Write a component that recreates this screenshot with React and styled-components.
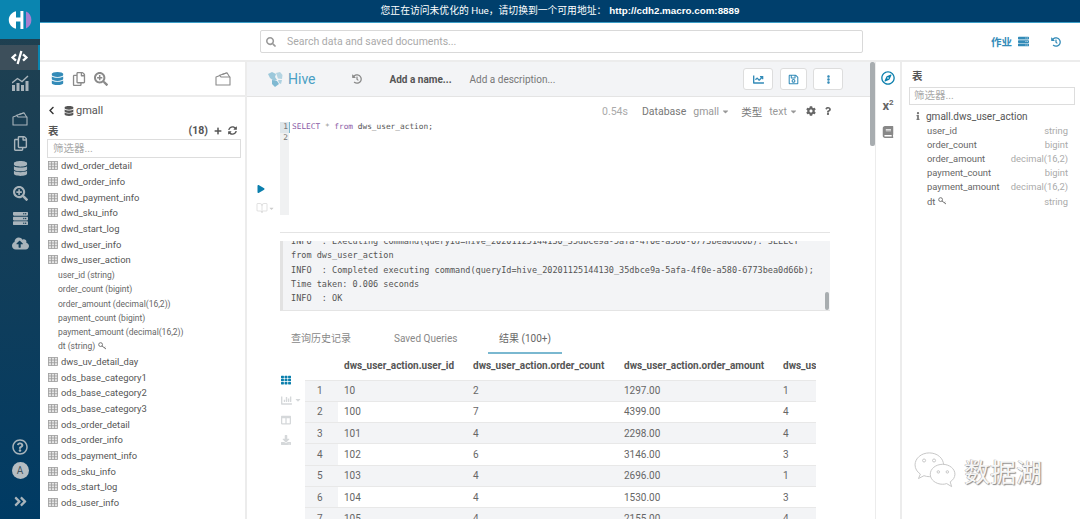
import React from 'react';
import styled, { createGlobalStyle } from 'styled-components';
import {
  FaAngleDoubleRight, FaBook, FaCaretDown, FaChartBar, FaChartLine, FaChevronLeft, FaCloudUploadAlt, FaCode, FaCog,
  FaColumns, FaDatabase, FaDownload, FaEllipsisV, FaHistory, FaInfo, FaPlay, FaPlus, FaQuestion, FaRegCompass,
  FaRegCopy, FaRegQuestionCircle, FaRegSave, FaSearch, FaSearchPlus, FaServer, FaSyncAlt, FaTh,
} from 'react-icons/fa';
import { BookOpen } from 'lucide-react';

const treeTop = ['dwd_order_detail', 'dwd_order_info', 'dwd_payment_info', 'dwd_sku_info', 'dwd_start_log', 'dwd_user_info', 'dws_user_action'];
const treeColumns = ['user_id (string)', 'order_count (bigint)', 'order_amount (decimal(16,2))', 'payment_count (bigint)', 'payment_amount (decimal(16,2))'];
const treeBottom = ['dws_uv_detail_day', 'ods_base_category1', 'ods_base_category2', 'ods_base_category3', 'ods_order_detail', 'ods_order_info', 'ods_payment_info', 'ods_sku_info', 'ods_start_log', 'ods_user_info'];
const assistColumns = [
  ['user_id', 'string'],
  ['order_count', 'bigint'],
  ['order_amount', 'decimal(16,2)'],
  ['payment_count', 'bigint'],
  ['payment_amount', 'decimal(16,2)'],
  ['dt', 'string', true],
];
const rows = [
  [1, 10, 2, '1297.00', 1],
  [2, 100, 7, '4399.00', 4],
  [3, 101, 4, '2298.00', 4],
  [4, 102, 6, '3146.00', 3],
  [5, 103, 4, '2696.00', 1],
  [6, 104, 4, '1530.00', 3],
  [7, 105, 4, '2155.00', 4],
];
const logLines = [
  'INFO  : Executing command(queryId=hive_20201125144130_35dbce9a-5afa-4f0e-a580-6773bea0d66b): SELECT *',
  'from dws_user_action',
  'INFO  : Completed executing command(queryId=hive_20201125144130_35dbce9a-5afa-4f0e-a580-6773bea0d66b);',
  'Time taken: 0.006 seconds',
  'INFO  : OK',
];

const HueLogo = () => (
  <svg width="24" height="20" viewBox="0 0 24 20">
    <path d="M8 1.2 V7.4 H12.4 V1 H15.4 V19 H12.4 V11.4 H8 V18.8 C3.6 17.6 .8 14.2 .8 10 C.8 5.8 3.6 2.4 8 1.2Z" fill="#fff" />
    <path d="M18 1.6 C21.4 3 23.4 6.2 23.4 10 C23.4 13.8 21.4 17 18 18.4Z" fill="#a77fd0" />
  </svg>
);

const TrendIcon = () => (
  <svg width="17" height="16" viewBox="0 0 17 16" fill="#a9b4bb">
    <rect x="0" y="10" width="3" height="6" />
    <rect x="4.5" y="8" width="3" height="8" />
    <rect x="9" y="10" width="3" height="6" />
    <rect x="13.5" y="6" width="3" height="10" />
    <path d="M0 8 L5.5 3.5 L10 6.5 L16 1" fill="none" stroke="#a9b4bb" strokeWidth="1.4" />
  </svg>
);

const FolderIcon = ({ color }) => (
  <svg width="16" height="14" viewBox="0 0 16 14" fill="none" stroke={color} strokeWidth="1.1" strokeLinejoin="round">
    <path d="M1 13 V5 L5 3.6 L6 5 H15 V13 Z" />
    <path d="M4 3.6 L12 .8 L14.6 5" />
    <path d="M7 2.6 L11.6 1" />
  </svg>
);

const TableIcon = () => (
  <svg width="10" height="9" viewBox="0 0 10 9" fill="none" stroke="#9b9b9b" strokeWidth="0.8">
    <rect x="0.5" y="0.5" width="9" height="8" fill="#e4e4e4" />
    <path d="M0.5 3 H9.5 M0.5 5.7 H9.5 M3.5 .5 V8.5 M6.5 .5 V8.5" />
  </svg>
);

const KeyIcon = () => (
  <svg width="9" height="8" viewBox="0 0 9 8" fill="none" stroke="#777" strokeWidth="1">
    <circle cx="2.6" cy="2.6" r="1.9" />
    <path d="M4 4 L8 7 M6.4 5.8 L7.2 4.8" />
  </svg>
);

const HiveIcon = () => (
  <svg width="16" height="15" viewBox="0 0 16 15" fill="#7fb9d2">
    <path d="M1 2 L5 0 L9 2 L8 5 L10 8 L7 9 L3 6 Z" opacity=".75" />
    <path d="M9 1 L13 0 L15.5 3 L15 7 L11 6.5 Z" opacity=".55" />
    <path d="M5 8 L10 9 L12 12 L8 15 L5 12 Z" />
    <path d="M11 8 L15 8 L14 12 L12 11 Z" opacity=".6" />
  </svg>
);

const WeChatIcon = () => (
  <svg width="42" height="38" viewBox="0 0 44 40" fill="#fff" stroke="#c4c4c4" strokeWidth="1">
    <path d="M16 2 C7.7 2 1 7.6 1 14.6 C1 18.6 3.2 22 6.6 24.3 L4.6 29 L10.4 26 C12.2 26.6 14 27 16 27 C24.3 27 31 21.4 31 14.6 C31 7.6 24.3 2 16 2Z" />
    <path d="M30 14 C22.8 14 17 18.7 17 24.5 C17 30.3 22.8 35 30 35 C31.5 35 33 34.8 34.3 34.3 L39.5 37.5 L38 32.5 C41 30.5 43 27.7 43 24.5 C43 18.7 37.2 14 30 14Z" />
    <circle cx="10.5" cy="10" r="1.6" />
    <circle cx="21" cy="10" r="1.6" />
    <circle cx="25.5" cy="22" r="1.3" />
    <circle cx="35" cy="22" r="1.3" />
  </svg>
);

const App = () => {
  return (
    <>
      <GlobalStyle />
      <Page>
        <Nav>
          <Logo><HueLogo /></Logo>
          <NavGroup>
            <NavItem $active><FaCode size={17} /></NavItem>
            <NavItem><TrendIcon /></NavItem>
          </NavGroup>
          <NavGroup $top={11}>
            <NavItem><FolderIcon color="#a9b4bb" /></NavItem>
            <NavItem><FaRegCopy size={15} /></NavItem>
            <NavItem><FaDatabase size={15} /></NavItem>
            <NavItem><FaSearchPlus size={15} /></NavItem>
            <NavItem><FaServer size={15} /></NavItem>
            <NavItem><FaCloudUploadAlt size={17} /></NavItem>
          </NavGroup>
          <NavFooter>
            <NavItem><FaRegQuestionCircle size={16} /></NavItem>
            <Avatar>A</Avatar>
            <NavItem $wide><FaAngleDoubleRight size={15} /></NavItem>
          </NavFooter>
        </Nav>

        <Content>
          <Banner>
            您正在访问未优化的 Hue，请切换到一个可用地址：<BannerLink>http://cdh2.macro.com:8889</BannerLink>
          </Banner>
          <TopBar>
            <SearchBox>
              <FaSearch size={10} color="#999" />
              <span>Search data and saved documents...</span>
            </SearchBox>
            <JobsButton>作业 <FaServer size={11} /></JobsButton>
            <FaHistory size={10} color="#338bb8" />
          </TopBar>

          <Workspace>
            <LeftPanel>
              <LeftTools>
                <FaDatabase size={13} color="#338bb8" />
                <FaRegCopy size={14} color="#8a8a8a" />
                <FaSearchPlus size={14} color="#8a8a8a" />
                <ToolSpacer />
                <FolderIcon color="#8a8a8a" />
              </LeftTools>
              <BackRow>
                <BackChevron size={9} color="#333" />
                <FaDatabase size={10} color="#555" />
                <span>gmall</span>
              </BackRow>
              <TreeHead>
                <strong>表</strong>
                <TreeActions>
                  <b>(18)</b>
                  <FaPlus size={8} />
                  <FaSyncAlt size={9} />
                </TreeActions>
              </TreeHead>
              <FilterInput>筛选器...</FilterInput>
              <Tree>
                {treeTop.map((name) => (
                  <TreeRow key={name}><TableIcon />{name}</TreeRow>
                ))}
                {treeColumns.map((name) => (
                  <TreeColumn key={name}>{name}</TreeColumn>
                ))}
                <TreeColumn>dt (string) <KeyIcon /></TreeColumn>
                {treeBottom.map((name) => (
                  <TreeRow key={name}><TableIcon />{name}</TreeRow>
                ))}
              </Tree>
            </LeftPanel>

            <Editor>
              <EditorHeader>
                <HiveIcon />
                <HiveTitle>Hive</HiveTitle>
                <HistoryWrap><FaHistory size={10} color="#8a8a8a" /></HistoryWrap>
                <NameLabel>Add a name...</NameLabel>
                <DescLabel>Add a description...</DescLabel>
                <HeaderButtons>
                  <HeaderButton $w={30}><FaChartLine size={11} /></HeaderButton>
                  <HeaderButton $w={27}><FaRegSave size={11} /></HeaderButton>
                  <HeaderButton $w={30}><FaEllipsisV size={9} /></HeaderButton>
                </HeaderButtons>
              </EditorHeader>
              <MetaRow>
                <Muted>0.54s</Muted>
                <MetaLabel>Database</MetaLabel>
                <MetaValue $gap={11}>gmall <FaCaretDown size={9} /></MetaValue>
                <MetaLabel>类型</MetaLabel>
                <MetaValue $gap={8}>text <FaCaretDown size={9} /></MetaValue>
                <MetaIcons>
                  <FaCog size={10} />
                  <FaQuestion size={8} />
                </MetaIcons>
              </MetaRow>
              <CodeArea>
                <RunColumn>
                  <FaPlay size={8} color="#0b7fad" />
                  <BookRow><BookOpen size={12} strokeWidth={1.2} /><FaCaretDown size={7} /></BookRow>
                </RunColumn>
                <Gutter>
                  <GutterLine $active>1</GutterLine>
                  <GutterLine>2</GutterLine>
                </Gutter>
                <CodeLine><Keyword>SELECT</Keyword> <Star>*</Star> <Keyword>from</Keyword> dws_user_action;</CodeLine>
              </CodeArea>
              <Divider />
              <LogBox>
                <LogText>
                  {logLines.map((line) => (
                    <div key={line}>{line}</div>
                  ))}
                </LogText>
                <LogThumb />
              </LogBox>
              <Tabs>
                <Tab $w={103}>查询历史记录</Tab>
                <Tab $w={105}>Saved Queries</Tab>
                <Tab $w={74} $active>结果 (100+)</Tab>
              </Tabs>
              <ResultArea>
                <ResultTools>
                  <FaTh size={10} color="#0b7fad" />
                  <ChartTool><FaChartBar size={11} /><FaCaretDown size={8} /></ChartTool>
                  <FaColumns size={10} />
                  <FaDownload size={10} />
                </ResultTools>
                <TableClip>
                  <ResultTable>
                    <colgroup>
                      <col width="33" />
                      <col width="129" />
                      <col width="151" />
                      <col width="159" />
                      <col width="159" />
                    </colgroup>
                    <thead>
                      <tr>
                        <th />
                        <th>dws_user_action.user_id</th>
                        <th>dws_user_action.order_count</th>
                        <th>dws_user_action.order_amount</th>
                        <th>dws_user_action.payment_count</th>
                      </tr>
                    </thead>
                    <tbody>
                      {rows.map((row) => (
                        <ResultRow key={row[0]} $odd={row[0] % 2 === 1}>
                          {row.map((cell, i) => (
                            <ResultCell key={i} $index={i === 0}>{cell}</ResultCell>
                          ))}
                        </ResultRow>
                      ))}
                    </tbody>
                  </ResultTable>
                </TableClip>
              </ResultArea>
            </Editor>

            <ScrollTrack><ScrollThumb /></ScrollTrack>

            <Rail>
              <FaRegCompass size={14} color="#0b7fad" />
              <Power>x<sup>2</sup></Power>
              <FaBook size={12} color="#888" />
            </Rail>

            <Assist>
              <AssistTitle>表</AssistTitle>
              <AssistFilter>筛选器...</AssistFilter>
              <AssistTable><FaInfo size={8} color="#777" /><span>gmall.dws_user_action</span></AssistTable>
              {assistColumns.map(([name, type, hasKey]) => (
                <AssistRow key={name}>
                  <span>{name} {hasKey && <KeyIcon />}</span>
                  <AssistType>{type}</AssistType>
                </AssistRow>
              ))}
            </Assist>
          </Workspace>
        </Content>

        <Watermark>
          <WeChatIcon />
          <span>数据湖</span>
        </Watermark>
      </Page>
    </>
  );
};

export default App;

const GlobalStyle = createGlobalStyle`
  html, body {
    margin: 0;
    padding: 0;
    background: #fff;
  }

  * {
    box-sizing: border-box;
  }
`;

const Page = styled.div`
  position: relative;
  display: flex;
  width: 1080px;
  height: 519px;
  overflow: hidden;
  font-family: Roboto, "Noto Sans CJK SC", sans-serif;
  color: #444;
`;

const Nav = styled.nav`
  display: flex;
  flex-direction: column;
  flex: 0 0 40px;
  background: linear-gradient(180deg, #21404f 0%, #143e58 45%, #003b64 100%);
  color: #a9b4bb;
`;

const Logo = styled.div`
  display: flex;
  align-items: center;
  justify-content: center;
  height: 39px;
  margin-bottom: 6px;
  background: #0a85b0;
`;

const NavGroup = styled.div`
  display: flex;
  flex-direction: column;
  margin-top: ${(p) => p.$top || 0}px;
`;

const NavItem = styled.div`
  display: flex;
  align-items: center;
  justify-content: center;
  height: ${(p) => (p.$wide ? 36 : 25)}px;
  background: ${(p) => (p.$active ? '#3d4f5b' : 'transparent')};
  border-right: ${(p) => (p.$active ? '2px solid #0a85b0' : 'none')};
  color: ${(p) => (p.$active ? '#fff' : 'inherit')};
`;

const NavFooter = styled.div`
  display: flex;
  flex-direction: column;
  align-items: stretch;
  margin-top: auto;
`;

const Avatar = styled.div`
  display: flex;
  align-items: center;
  justify-content: center;
  width: 17px;
  height: 17px;
  margin: 3px auto 4px;
  border-radius: 50%;
  background: #b5bdc2;
  color: #40525e;
  font-size: 10px;
`;

const Content = styled.div`
  display: flex;
  flex-direction: column;
  flex: 1;
  min-width: 0;
`;

const Banner = styled.div`
  flex: 0 0 23px;
  padding-top: 1px;
  background: #003f6c;
  border-bottom: 1px solid #3b9ec7;
  color: #fff;
  font-size: 9.8px;
  line-height: 20px;
  text-align: center;
`;

const BannerLink = styled.b`
  margin-left: 3px;
  font-family: "Liberation Sans", sans-serif;
  font-size: 9.8px;
`;

const TopBar = styled.header`
  display: flex;
  align-items: center;
  flex: 0 0 39px;
  padding: 0 0 0 220px;
  border-bottom: 2px solid #ececec;
`;

const SearchBox = styled.div`
  display: flex;
  align-items: center;
  gap: 11px;
  flex: 0 0 603px;
  height: 23px;
  padding-left: 5px;
  border: 1px solid #d9d9d9;
  border-radius: 2px;
  color: #aaa;
  font-size: 10.5px;
`;

const JobsButton = styled.div`
  display: flex;
  align-items: center;
  gap: 6px;
  margin: 0 22px 0 128px;
  color: #338bb8;
  font-size: 10.5px;
  font-weight: 700;
  white-space: nowrap;
`;

const Workspace = styled.main`
  display: flex;
  flex: 1;
  min-height: 0;
`;

const LeftPanel = styled.aside`
  flex: 0 0 207px;
  border-right: 2px solid #ececec;
`;

const LeftTools = styled.div`
  display: flex;
  align-items: center;
  gap: 8px;
  height: 35px;
  padding: 0 14px 0 11px;
  border-bottom: 2px solid #ececec;
`;

const ToolSpacer = styled.div`
  flex: 1;
`;

const BackRow = styled.div`
  display: flex;
  align-items: center;
  gap: 2px;
  height: 25px;
  padding: 2px 0 0 7px;
  color: #555;
  font-size: 11px;
`;

const BackChevron = styled(FaChevronLeft)`
  margin-right: 6px;
`;

const TreeHead = styled.div`
  display: flex;
  align-items: center;
  justify-content: space-between;
  height: 17px;
  padding: 0 8px;
  color: #555;
  font-size: 10.5px;

  strong {
    font-weight: 700;
  }
`;

const TreeActions = styled.div`
  display: flex;
  align-items: center;
  gap: 6px;
`;

const FilterInput = styled.div`
  height: 19px;
  margin: 0 4px 0 7px;
  padding-left: 5px;
  border: 1px solid #ddd;
  color: #aaa;
  font-size: 10.5px;
  line-height: 17px;
`;

const Tree = styled.div`
  padding-top: 0;
`;

const TreeRow = styled.div`
  display: flex;
  align-items: center;
  gap: 3px;
  height: 15.7px;
  padding-left: 8px;
  color: #555;
  font-size: 9.4px;
`;

const TreeColumn = styled.div`
  display: flex;
  align-items: center;
  gap: 3px;
  height: 14.3px;
  padding-left: 18px;
  color: #666;
  font-size: 8.5px;
`;

const Editor = styled.section`
  display: flex;
  flex-direction: column;
  flex: 0 0 623px;
  min-width: 0;
`;

const EditorHeader = styled.div`
  display: flex;
  align-items: center;
  flex: 0 0 35px;
  padding: 0 27px 0 20px;
  background: #f3f4f6;
  border-bottom: 1px solid #e4e4e4;
`;

const HiveTitle = styled.span`
  margin-left: 5px;
  color: #4a9fc4;
  font-size: 14px;
`;

const HistoryWrap = styled.span`
  display: flex;
  margin: 0 28px 0 36px;
`;

const NameLabel = styled.span`
  color: #555;
  font-size: 10px;
  font-weight: 700;
`;

const DescLabel = styled.span`
  margin-left: 18px;
  color: #777;
  font-size: 10px;
`;

const HeaderButtons = styled.div`
  display: flex;
  gap: 6.5px;
  margin-left: auto;
`;

const HeaderButton = styled.div`
  display: flex;
  align-items: center;
  justify-content: center;
  width: ${(p) => p.$w}px;
  height: 22px;
  background: #fff;
  border: 1px solid #ddd;
  border-radius: 3px;
  color: #338bb8;
`;

const MetaRow = styled.div`
  display: flex;
  align-items: center;
  flex: 0 0 25px;
  padding: 3px 0 0 355px;
  font-size: 10.5px;
`;

const Muted = styled.span`
  margin-right: 14px;
  color: #aaa;
`;

const MetaLabel = styled.span`
  margin-right: 7px;
  color: #777;
`;

const MetaValue = styled.span`
  display: inline-flex;
  align-items: center;
  gap: 2px;
  margin-right: ${(p) => p.$gap}px;
  color: #999;
`;

const MetaIcons = styled.span`
  display: flex;
  align-items: center;
  gap: 8px;
  color: #666;
`;

const CodeArea = styled.div`
  display: flex;
  flex: 0 0 93px;
  padding-left: 10px;
`;

const RunColumn = styled.div`
  display: flex;
  flex-direction: column;
  align-items: flex-start;
  flex: 0 0 23px;
  padding-top: 63px;
`;

const BookRow = styled.div`
  display: flex;
  align-items: center;
  margin: 9px 0 0 -1px;
  color: #ccc;
`;

const Gutter = styled.div`
  flex: 0 0 9px;
  background: #f0f1f2;
  color: #777;
  font-family: "DejaVu Sans Mono", monospace;
  font-size: 7.8px;
`;

const GutterLine = styled.div`
  height: 10.5px;
  line-height: 10.5px;
  text-align: right;
  padding-right: 1px;
  background: ${(p) => (p.$active ? '#dfe6ea' : 'transparent')};
  box-shadow: ${(p) => (p.$active ? '1px 0 0 #7ab8d0' : 'none')};
`;

const CodeLine = styled.div`
  padding-left: 3px;
  color: #555;
  font-family: "DejaVu Sans Mono", monospace;
  font-size: 7.8px;
  line-height: 10.5px;
  white-space: pre;
`;

const Keyword = styled.span`
  color: #8a5aa6;
`;

const Star = styled.span`
  color: #888;
`;

const Divider = styled.div`
  flex: 0 0 1px;
  margin: 17px 40px 0 33px;
  background: #e4e4e4;
`;

const LogBox = styled.div`
  position: relative;
  flex: 0 0 70px;
  margin: 8px 40px 0 33px;
  overflow: hidden;
  background: #f3f4f6;
  border-left: 3px solid #e2e2e2;
  border-bottom: 1px solid #e4e4e4;
`;

const LogText = styled.div`
  margin-top: -7px;
  padding-left: 8px;
  color: #555;
  font-family: "DejaVu Sans Mono", monospace;
  font-size: 8.52px;
  line-height: 14.3px;
  white-space: pre;
`;

const LogThumb = styled.div`
  position: absolute;
  top: 51px;
  right: 1px;
  width: 4px;
  height: 18px;
  border-radius: 2px;
  background: #a8adb0;
`;

const Tabs = styled.div`
  display: flex;
  flex: 0 0 23px;
  margin: 20px 0 0 33px;
`;

const Tab = styled.div`
  flex: 0 0 ${(p) => p.$w}px;
  padding-left: 11px;
  border-bottom: 2px solid ${(p) => (p.$active ? '#7ab8d0' : 'transparent')};
  color: ${(p) => (p.$active ? '#666' : '#888')};
  font-size: 10px;
  line-height: 15px;
  white-space: nowrap;
`;

const ResultArea = styled.div`
  display: flex;
  flex: 1;
  min-height: 0;
  padding-left: 34px;
`;

const ResultTools = styled.div`
  display: flex;
  flex-direction: column;
  align-items: flex-start;
  gap: 9.5px;
  flex: 0 0 24px;
  padding-top: 21px;
  color: #d5d8da;
`;

const ChartTool = styled.div`
  display: flex;
  align-items: center;
  gap: 2px;
`;

const TableClip = styled.div`
  flex: 0 0 511px;
  overflow: hidden;
`;

const ResultTable = styled.table`
  width: 631px;
  table-layout: fixed;
  border-collapse: collapse;
  font-size: 10px;

  th {
    height: 26px;
    padding: 0 0 2px 6px;
    color: #555;
    font-weight: 700;
    text-align: left;
    white-space: nowrap;
    overflow: hidden;
  }
`;

const ResultRow = styled.tr`
  height: 21.3px;
  background: ${(p) => (p.$odd ? '#f3f4f6' : '#fff')};
  border-top: 1px solid #e8e8e8;
`;

const ResultCell = styled.td`
  padding: 0 0 0 ${(p) => (p.$index ? 12 : 6)}px;
  background: ${(p) => (p.$index ? '#f3f4f6' : 'transparent')};
  color: #666;
  font-size: 10px;
`;

const ScrollTrack = styled.div`
  flex: 0 0 5px;
`;

const ScrollThumb = styled.div`
  width: 5px;
  height: 84px;
  border-radius: 2px;
  background: #a8adb0;
`;

const Rail = styled.div`
  display: flex;
  flex-direction: column;
  align-items: center;
  gap: 14px;
  flex: 0 0 27px;
  padding-top: 9px;
  border-left: 1px solid #ececec;
  border-right: 2px solid #ececec;
`;

const Power = styled.span`
  color: #666;
  font-size: 13px;
  font-weight: 700;
  line-height: 13px;

  sup {
    font-size: 8px;
    line-height: 0;
  }
`;

const Assist = styled.aside`
  flex: 1;
  padding: 8px 5px 0 7px;
`;

const AssistTitle = styled.div`
  padding-left: 3px;
  color: #555;
  font-size: 10.5px;
  font-weight: 700;
  line-height: 14px;
`;

const AssistFilter = styled.div`
  height: 18px;
  margin-top: 3px;
  padding-left: 4px;
  border: 1px solid #ddd;
  color: #aaa;
  font-size: 10.5px;
  line-height: 16px;
`;

const AssistTable = styled.div`
  display: flex;
  align-items: center;
  gap: 4px;
  height: 14px;
  margin-top: 4px;
  padding-left: 5px;
  color: #555;
  font-size: 10px;
`;

const AssistRow = styled.div`
  display: flex;
  align-items: center;
  justify-content: space-between;
  height: 14.2px;
  padding: 0 7px 0 18px;
  color: #666;
  font-size: 9.4px;
`;

const AssistType = styled.span`
  color: #aaa;
`;

const Watermark = styled.div`
  position: absolute;
  top: 451px;
  left: 914px;
  display: flex;
  align-items: center;
  gap: 8px;
  color: #f6f6f6;
  font-size: 26px;
  text-shadow: 1px 1px 1px #888, -0.5px -0.5px 0 #aaa;
`;
